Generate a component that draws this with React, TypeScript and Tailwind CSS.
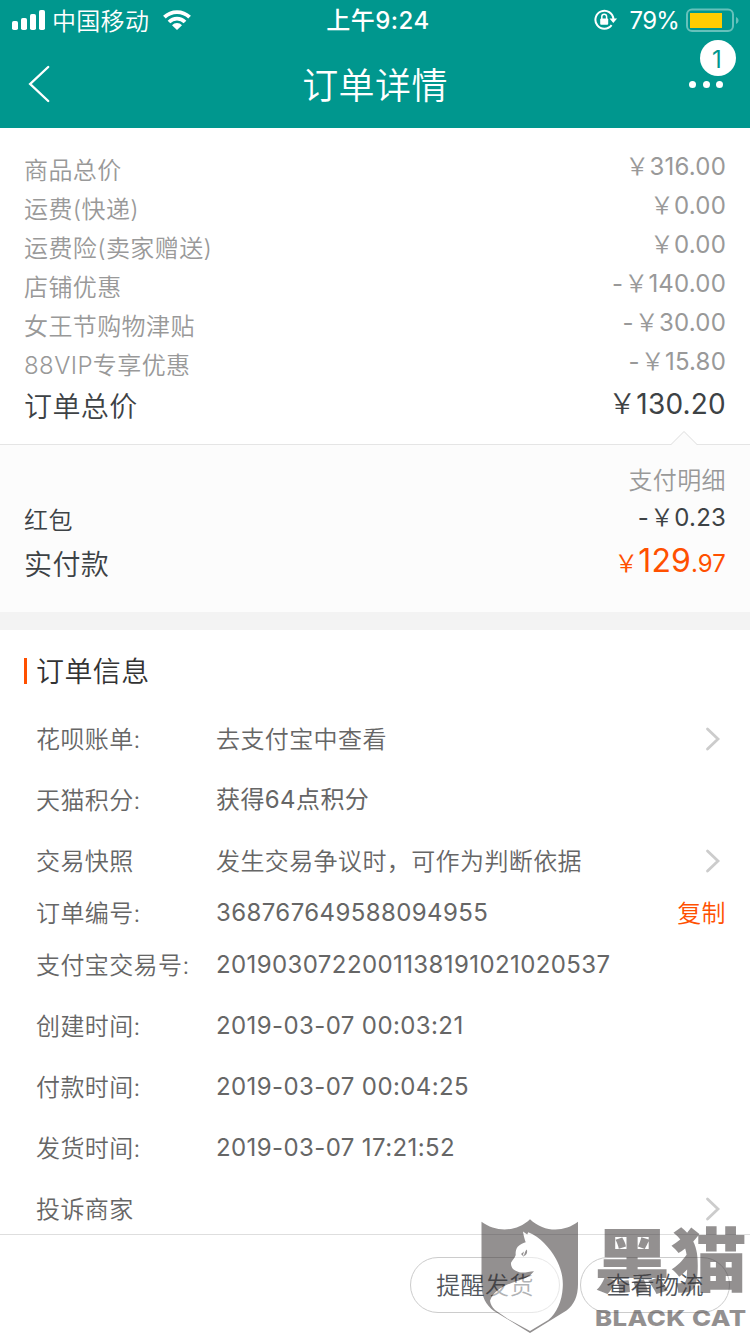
import React from "react";

const fees = [
  { label: "商品总价", value: "316.00" },
  { label: "运费(快递)", value: "0.00" },
  { label: "运费险(卖家赠送)", value: "0.00" },
  { label: "店铺优惠", value: "140.00", minus: true },
  { label: "女王节购物津贴", value: "30.00", minus: true },
  { label: "88VIP专享优惠", value: "15.80", minus: true },
];

type InfoItem = {
  label: string;
  value?: string;
  arrow?: boolean;
  copy?: boolean;
};

const infos: InfoItem[] = [
  { label: "花呗账单:", value: "去支付宝中查看", arrow: true },
  { label: "天猫积分:", value: "获得64点积分" },
  { label: "交易快照", value: "发生交易争议时，可作为判断依据", arrow: true },
  { label: "订单编号:", value: "368767649588094955", copy: true },
  { label: "支付宝交易号:", value: "2019030722001138191021020537" },
  { label: "创建时间:", value: "2019-03-07 00:03:21" },
  { label: "付款时间:", value: "2019-03-07 00:04:25" },
  { label: "发货时间:", value: "2019-03-07 17:21:52" },
  { label: "投诉商家", arrow: true },
];

function StatusBar() {
  return (
    <div className="flex h-10 items-center justify-between pl-3 pr-[10px]">
      <div className="flex w-[276px] items-center">
        <svg width="34" height="20" viewBox="0 0 34 20" fill="#fff">
          <rect x="0" y="11" width="6" height="9" rx="1.8" />
          <rect x="9" y="8" width="6" height="12" rx="1.8" />
          <rect x="18" y="4" width="6" height="16" rx="1.8" />
          <rect x="27" y="0" width="6" height="20" rx="1.8" />
        </svg>
        <span className="ml-[6px] pt-[3px] font-[350] tracking-[0.3px]">
          中国移动
        </span>
        <svg className="ml-[14px]" width="28" height="20" viewBox="0 0 28 20">
          <g fill="none" stroke="#fff" strokeWidth="3.8">
            <path d="M1.4 7.2a18 18 0 0 1 25.2 0" />
            <path d="M6 12a11.4 11.4 0 0 1 16 0" />
          </g>
          <path d="M9 15.2a7 7 0 0 1 10 0L14 20z" fill="#fff" />
        </svg>
      </div>
      <div className="pl-1 pt-[2px] font-medium tracking-[0.5px]">
        上午9:24
      </div>
      <div className="flex w-[276px] items-center justify-end">
        <svg width="24" height="22" viewBox="0 0 24 22">
          <path
            d="M17.6 16.2A9 9 0 1 1 19.4 10"
            fill="none"
            stroke="#fff"
            strokeWidth="2"
          />
          <path d="M15.5 9.6h7.6L19.3 14z" fill="#fff" />
          <rect x="6.2" y="9.6" width="8" height="6.2" rx="1" fill="#fff" />
          <path
            d="M7.8 10V7.6a2.4 2.4 0 0 1 4.8 0V10"
            fill="none"
            stroke="#fff"
            strokeWidth="1.5"
          />
        </svg>
        <span className="ml-[12px] pt-[2px] tracking-[-0.8px]">79%</span>
        <svg className="ml-[7px]" width="54" height="24" viewBox="0 0 54 24">
          <rect
            x="1"
            y="1.5"
            width="46"
            height="21.5"
            rx="5"
            fill="none"
            stroke="#66c1bb"
            strokeWidth="2"
          />
          <path d="M50 9c3.4 1.4 3.4 5.6 0 7z" fill="#66c1bb" />
          <rect x="4" y="5" width="32" height="15" fill="#ffcc00" />
        </svg>
      </div>
    </div>
  );
}

function NavBar() {
  return (
    <div className="relative flex h-[88px] items-center justify-center">
      <svg
        className="absolute left-7 top-6"
        width="24"
        height="40"
        viewBox="0 0 24 40"
      >
        <path
          d="M20.2 3L2.2 20l18 17"
          fill="none"
          stroke="#fff"
          strokeWidth="2.4"
          strokeLinecap="round"
        />
      </svg>
      <h1 className="pt-1 text-[36px] font-[350] tracking-[0.4px]">订单详情</h1>
      <div className="absolute right-[27px] top-[41px] flex gap-[6.5px]">
        <i className="size-[7px] rounded-full bg-white" />
        <i className="size-[7px] rounded-full bg-white" />
        <i className="size-[7px] rounded-full bg-white" />
      </div>
      <div className="absolute right-[14px] top-0 flex size-9 items-center justify-center rounded-full bg-white pr-[2px] pt-[3px] text-[24px] text-[#00978e]">
        1
      </div>
    </div>
  );
}

function Arrow() {
  return (
    <svg className="-mr-px" width="16" height="26" viewBox="0 0 16 26">
      <path
        d="M2.5 3L13 13 2.5 23"
        fill="none"
        stroke="#ccc"
        strokeWidth="2.8"
        strokeLinecap="round"
      />
    </svg>
  );
}

function Price({ value, minus }: { value: string; minus?: boolean }) {
  return (
    <span className="pb-[5px] font-normal tracking-[0.2px]">
      {minus && <span className="mr-px">-</span>}
      <span className="inline-block font-[350]">￥</span>
      {value}
    </span>
  );
}

function InfoRow({ item }: { item: InfoItem }) {
  return (
    <div
      className={`flex shrink-0 items-center pl-9 pr-[30px] ${
        item.copy ? "h-[43px]" : "h-[61px]"
      }`}
    >
      <span className="w-[180px] whitespace-nowrap pt-[2px]">{item.label}</span>
      <span
        className={`flex-1 whitespace-nowrap ${
          item.arrow ? "pt-[2px]" : "pt-px font-normal"
        }`}
      >
        {item.value}
      </span>
      {item.arrow && <Arrow />}
      {item.copy && (
        <span className="-mr-[6px] pt-[2px] text-[#ff5000]">复制</span>
      )}
    </div>
  );
}

function Watermark() {
  return (
    <div className="pointer-events-none absolute left-[480px] top-[1218px] h-[116px] w-[270px] text-[#3b3637] opacity-55">
      <svg
        className="absolute left-0 top-0"
        width="100"
        height="116"
        viewBox="0 0 100 116"
      >
        <path
          d="M1.500 3.800C16 14.500 36 14.500 50 1.200c14 13.300 34 13.300 48 2.600V66c0 12-4 21-11.500 26.500L50 115 14 93C6 87 1.500 79 1.500 66z"
          fill="currentColor"
        />
        <path
          d="M43 13.500l4.200 3 1.100-2.200C60 19 70 30 76 41c5 9 7.500 19 6.700 29-.7 13-6 25-14.400 32L50 113 28 101 15 92c-3-3-4.500-6-5-9.300C11 79 14 75 18 72c5-4 11-6 17-8.300 6-2.200 13-3 19-10.400-5 .3-10 2-14.700 1-2.300-1-4.300-1.800-6.300-3.300-1.500-2-2.200-4-2-6.300 1.500-3 3.700-4 4.700-7.700-.3-3 .2-6 2-8.300 2.300-2.200 5-3.600 8-4.400-1.200-3.500-2.200-7-2.700-10.800z"
          fill="#fff"
        />
        <path
          d="M41 36l3-2.500-1 3.200 1 2.300zM46.800 31.500c1 3-.3 6-3.300 6.500 1.500-2 1-4.500 3.300-6.500z"
          fill="currentColor"
        />
      </svg>
      <div className="absolute left-[114px] top-[8px] origin-top-left scale-x-[1.09] whitespace-nowrap text-[70px] font-black leading-[72px]">
        黑猫
      </div>
      <div className="absolute left-[115px] top-[88px] origin-top-left scale-x-[1.17] whitespace-nowrap text-[22px] font-extrabold leading-[25px]">
        BLACK CAT
      </div>
    </div>
  );
}

export default function App() {
  return (
    <div className="relative flex h-[1334px] w-[750px] flex-col overflow-hidden bg-white font-['Inter','Noto_Sans_CJK_SC',sans-serif] text-[24px] font-[350] leading-none tracking-[0.4px] text-[#666]">
      <header className="shrink-0 bg-[#00978e] font-normal text-white">
        <StatusBar />
        <NavBar />
      </header>

      <section className="h-[316px] shrink-0 px-6 pt-[22px] text-[#999]">
        {fees.map((fee) => (
          <div
            key={fee.label}
            className="flex h-[39px] items-center justify-between"
          >
            <span className="pt-[2px]">{fee.label}</span>
            <Price value={fee.value} minus={fee.minus} />
          </div>
        ))}
        <div className="flex h-11 items-center justify-between text-[28px] text-[#3d4245]">
          <span className="pt-[2px]">订单总价</span>
          <Price value="130.20" />
        </div>
      </section>

      <section className="relative h-[168px] shrink-0 border-t border-[#e5e5e5] bg-[#fcfcfc] px-6 pt-[17px] text-[#3d4245]">
        <svg
          className="absolute right-[52px] -top-[15px]"
          width="28"
          height="16"
          viewBox="0 0 28 16"
        >
          <path d="M1 15L14 1.500 27 15v1H1z" fill="#fcfcfc" />
          <path d="M1 14.500L14 1.500l13 13" fill="none" stroke="#ddd" />
        </svg>
        <div className="flex h-9 items-center justify-end pt-[2px] text-[#999]">
          支付明细
        </div>
        <div className="flex h-11 items-center justify-between">
          <span className="pt-[2px]">红包</span>
          <Price value="0.23" minus />
        </div>
        <div className="flex h-11 items-center justify-between">
          <span className="pt-[2px] text-[28px]">实付款</span>
          <span className="pb-[6px] font-normal tracking-[0.1px] text-[#ff5000]">
            <span className="inline-block font-[350]">￥</span>
            <span className="text-[32px]">129</span>.97
          </span>
        </div>
      </section>

      <div className="h-[18px] shrink-0 bg-[#f3f3f3]" />

      <section className="flex h-[604px] shrink-0 flex-col overflow-hidden">
        <div className="flex h-[78px] shrink-0 items-center pl-6 pt-1 text-[28px] text-[#333]">
          <i className="mr-[9px] h-[26px] w-[3px] bg-[#ff5000]" />
          <h2 className="pt-[2px]">订单信息</h2>
        </div>
        {infos.map((item) => (
          <InfoRow key={item.label} item={item} />
        ))}
      </section>

      <footer className="flex flex-1 items-center justify-end gap-5 border-t border-[#dedede] px-5">
        <button className="h-14 w-[150px] rounded-full border border-[#ccc] pt-[3px] text-[#51565c]">
          提醒发货
        </button>
        <button className="h-14 w-[150px] rounded-full border border-[#ccc] pt-[3px] text-[#51565c]">
          查看物流
        </button>
      </footer>

      <Watermark />
    </div>
  );
}
